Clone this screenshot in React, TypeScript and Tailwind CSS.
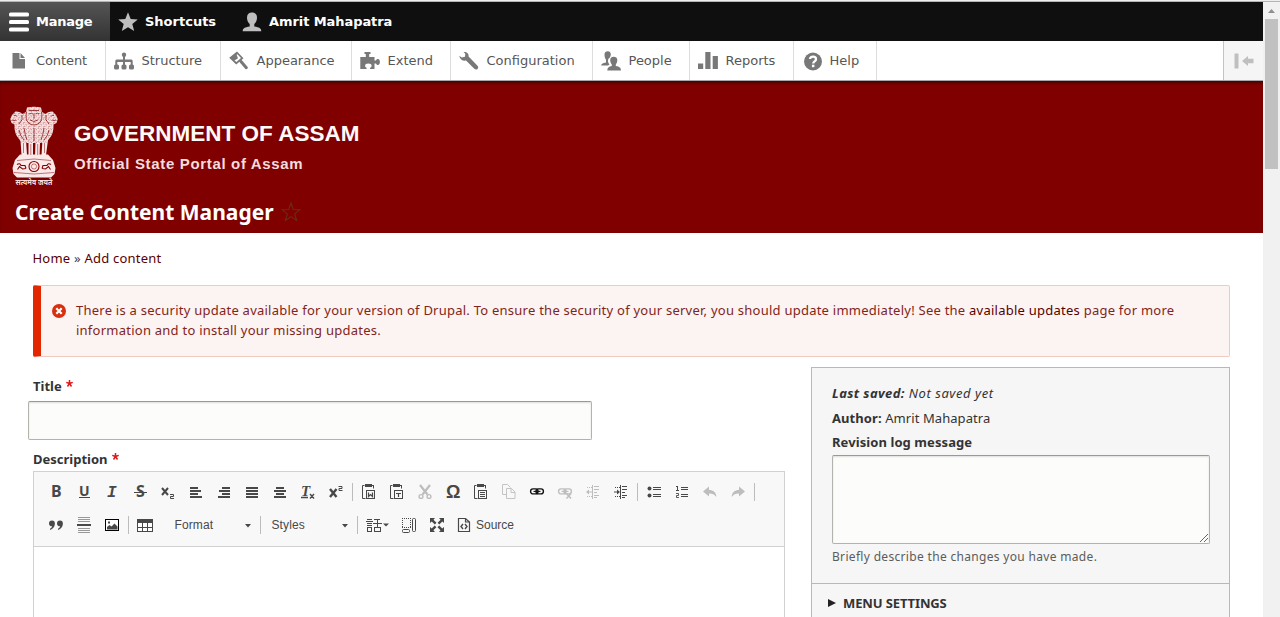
import type { ReactNode } from "react";

const VERDANA = "font-['DejaVu_Sans',sans-serif]";

/* ---------- Administration toolbar icons ---------- */

const trayIcons: Record<string, ReactNode> = {
  content: <path d="M4.500 2h7v6H17v9.500H4.500zM12.500 2l4.500 5h-4.500z" />,
  structure: (
    <>
      <circle cx="10" cy="3.700" r="2.200" />
      <path d="M9 4h2v4.400h5.900c1.200 0 1.800.7 1.800 1.700V15h-2v-4H11v4H9v-4H3.300v4h-2v-5c0-1 .7-1.600 1.700-1.600h6z" />
      <rect x="0" y="13.500" width="5" height="5" rx="1.600" />
      <rect x="7.500" y="13.500" width="5" height="5" rx="1.600" />
      <rect x="15" y="13.500" width="5" height="5" rx="1.600" />
    </>
  ),
  appearance: (
    <>
      <path
        fillRule="evenodd"
        d="M8 .5l6.500 6.800-7.300 6.200L.2 6.800zM7.600 3.800 9 7.200 5.500 9.500l1.900 1.600 4.600-4-3.600-3.900z"
      />
      <path d="M10 10.500l2.200-2 6.500 7.400c.8 1.100-1.200 3-2.300 2.100z" />
    </>
  ),
  extend: (
    <path d="M4.500 1h6v2H9.200v3h5.300v3.500h1.500C16.300 8.500 17 8 17.900 8c1.200 0 2 1.200 2 2.900s-.8 3.100-2 3.100c-1 0-1.600-.6-1.900-1.500h-1.500V18H10v-1.300c1-.4 1.600-1.100 1.600-2 0-1.300-1.300-2.200-3.300-2.200-1.900 0-3.200.9-3.200 2.200 0 .9.500 1.600 1.500 2V18H.3V6h5.500V3H4.500z" />
  ),
  configuration: (
    <path d="M4.500 1C7.800.600 10 2.700 9.600 5.600l8.900 9.200c1.100 1.200.8 2.500 0 3.200-.9.800-2.200.8-3.200-.2L7 9.600C3.600 10.200.8 8.100.2 4.700L2.800 6.500 6 5.800l.3-3z" />
  ),
  people: (
    <>
      <path d="M3.500 3.500C3.500 1.300 5 .3 6.800.3s3 1.200 3 3.200c0 1-.4 2-.9 2.900-1.500 1-2.400 2.600-1.700 4.900.3 1 .8 1.700 1.300 2.300l-1.500 1H.2c0-1.700 1.200-2.400 4.800-3.200V8.800C4.100 7.500 3.500 5.500 3.500 3.500z" />
      <path d="M9.200 9c0-2.200 1.500-3.300 3.500-3.300S16.300 6.800 16.300 9c0 1.800-.6 3.400-1.500 4.500v1.600c3.700.7 5.200 1.800 5.200 4.400H6.300c0-2.600 1.300-3.700 4.500-4.400v-1.600C9.800 12.400 9.200 10.800 9.200 9z" />
    </>
  ),
  reports: <path d="M0 12.500h5.200V18H0zM7.300 1h5.200v17H7.300zM14.700 5h5.200v13h-5.200z" />,
  help: (
    <>
      <circle cx="11" cy="10.500" r="9" />
      <path
        d="M8 8c0-3.200 6-3.200 6 .2 0 2.300-2.800 2-2.800 4.300"
        fill="none"
        stroke="#fff"
        strokeWidth="2.300"
      />
      <rect x="9.900" y="13.700" width="2.500" height="2.500" fill="#fff" />
    </>
  ),
};

const trayItems = [
  { label: "Content", icon: "content", width: "w-[106px]" },
  { label: "Structure", icon: "structure", width: "w-[115px]" },
  { label: "Appearance", icon: "appearance", width: "w-[131px]" },
  { label: "Extend", icon: "extend", width: "w-[99px]" },
  { label: "Configuration", icon: "configuration", width: "w-[142px]" },
  { label: "People", icon: "people", width: "w-[97px]" },
  { label: "Reports", icon: "reports", width: "w-[104px]" },
  { label: "Help", icon: "help", width: "w-[83px]" },
];

function AdminBar() {
  return (
    <nav className={`flex h-[39px] shrink-0 bg-[#0f0f0f] text-[13px] font-bold tracking-[-0.080px] text-white ${VERDANA}`}>
      <a className="flex w-[110px] items-center bg-linear-to-b from-[#555] to-[#333] pl-[9px]">
        <svg className="h-5 w-5" viewBox="0 0 20 20" fill="#fff">
          <rect y="0.500" width="20" height="4" rx="1.500" />
          <rect y="8" width="20" height="4" rx="1.500" />
          <rect y="15.500" width="20" height="4" rx="1.500" />
        </svg>
        <span className="pl-[7px] tracking-[-0.250px]">Manage</span>
      </a>
      <a className="flex w-[124px] items-center pl-[8px]">
        <svg className="h-5 w-5" viewBox="0 0 20 20" fill="#bebebe">
          <path d="m10 .3 2.700 6.700 7.100.4-5.500 4.600 1.900 7.100L10 15.300l-6.200 3.800L5.700 12 .2 7.400l7.100-.4z" />
        </svg>
        <span className="pl-[7px] tracking-[0px]">Shortcuts</span>
      </a>
      <a className="flex items-center pl-[8px]">
        <svg className="h-5 w-5" viewBox="0 0 20 20" fill="#bebebe">
          <path d="M5 5.500C5 2.200 7 .5 10 .5s5 1.700 5 5c0 2.600-1 5-2.700 6.600v2.300c5 .8 7 1.700 7 4.800H.7c0-3.100 2-4 7-4.800v-2.300C6 10.500 5 8.100 5 5.500z" />
        </svg>
        <span className="pl-[7px]">Amrit Mahapatra</span>
      </a>
    </nav>
  );
}

function Tray() {
  return (
    <div className={`flex h-10 shrink-0 border-b border-[#a9a9a9] bg-white text-[13px] text-[#565656] ${VERDANA}`}>
      {trayItems.map((item) => (
        <a key={item.label} className={`flex shrink-0 items-center border-r border-[#ddd] pl-2 ${item.width}`}>
          <svg className="h-5 w-5 shrink-0" viewBox="0 0 20 20" fill="#787878">
            {trayIcons[item.icon]}
          </svg>
          <span className={item.icon === "content" ? "pl-2 tracking-[-0.080px]" : "pl-[7.500px]"}>{item.label}</span>
        </a>
      ))}
      <div className="ml-auto flex w-10 items-center justify-center border-l border-[#c4c4c4] bg-[#f5f5f5]">
        <svg className="h-4 w-5" viewBox="0 0 20 16" fill="#bfbfbf">
          <rect x="0.500" y="0.500" width="4" height="15" rx="0.500" />
          <path d="M8 8l6-5v2.800h5.500v4.400H14V13z" />
        </svg>
      </div>
    </div>
  );
}

/* ---------- Site branding ---------- */

function Emblem() {
  return (
    <svg className="h-[84px] w-12 shrink-0 overflow-visible" viewBox="0 0 48 84">
      <defs>
        <pattern id="mane" width="5" height="4.400" patternUnits="userSpaceOnUse">
          <path
            d="M.3.600q1 1.500 2 0M2.800 2.800q1 1.500 2 0M3.600.300l.6.900M.8 3l.8.700"
            fill="none"
            stroke="#8d1c1c"
            strokeWidth="0.600"
          />
        </pattern>
      </defs>
      <g fill="#fbe9e9">
        <path d="M17 1.500Q24 .2 31 1.500l1 4.500 3.500 2Q38 5 42.500 5.500L46 9l1.700 4-1.200 4-3 1.500q.5 9-4.500 14.500l-3 4H12l-3-4Q4 27.500 4.500 18.500L1.500 17 .3 13 2 9l3.500-3.500Q10 5 12.500 8L16 6z" />
        <path d="M10.500 34h5.500l1 15h-5.500zM18.500 36h4.500v15h-4.500zM25.500 36H30l-.5 15H25zM32.500 34H38l-2 15h-4.500z" />
        <path d="M10 48.500h28L43 54l2.500 8-1 6L41 71.500H7L3.500 68l-1-6L5 54z" />
      </g>
      <path d="M17 1.500Q24 .2 31 1.500l1 4.500 3.500 2Q38 5 42.500 5.500L46 9l1.700 4-1.200 4-3 1.500q.5 9-4.500 14.500l-3 4H12l-3-4Q4 27.500 4.500 18.500L1.500 17 .3 13 2 9l3.500-3.500Q10 5 12.500 8L16 6z" fill="url(#mane)" />
      <g fill="none" stroke="#800000" strokeWidth="0.700">
        <path d="M19 4.500h10M19.500 8q2-1.500 3.500 0M25.500 8q2-1.500 3.500 0M24 8v4.500M20 14q4 3 8 0M16.500 6q-1.500 7 2 11 5.500 4 11 0 3.500-4 2-11" />
        <path d="M4 9.500q2-1 3 1M2 14q2 1.500 4 0M44 9.500q-2-1-3 1M46 14q-2 1.500-4 0M12 9q1.500 5-3 9M36 9q-1.500 5 3 9M14 22q1 7 3 12M34 22q-1 7-3 12M24 22v13M9 24q1 6 5 10M39 24q-1 6-5 10" />
        <path d="M13.500 37v10M20.800 38v11M27.700 38v11M34.500 37v10" strokeWidth="0.500" />
        <path d="M7 54.500q17-3 34 0M4 66.500q20 3 40 0" strokeWidth="0.500" />
        <circle cx="24" cy="60.500" r="5" strokeWidth="1.100" />
        <circle cx="24" cy="60.500" r="2.600" strokeWidth="0.500" />
        <path d="M7 58.500q3-2 4 1l4 0 1 3M7.500 63.500l2-3 3 2.500 3.500-.5M41 58.500q-3-2-4 1l-4 0-1 3M40.500 63.500l-2-3-3 2.500-3.500-.5" strokeWidth="1.100" />
      </g>
      <text x="24" y="79" textAnchor="middle" textLength="37" lengthAdjust="spacingAndGlyphs" fontSize="8" fontWeight="700" fill="#f7dede" fontFamily="'Noto Sans', 'Noto Sans Devanagari', sans-serif">
        सत्यमेव जयते
      </text>
    </svg>
  );
}

function SiteHeader() {
  return (
    <header className="flex h-[152px] shrink-0 flex-col bg-[#800000] shadow-[inset_0_3px_3px_-1px_rgba(40,0,0,0.600)]">
      <div className="flex pt-[25px] pl-[10px]">
        <Emblem />
        <div className="pt-[14px] pl-4 font-['Liberation_Sans',sans-serif] font-bold">
          <div className="text-[22.500px] leading-7 tracking-[0px] whitespace-nowrap text-[#fffafa]">GOVERNMENT OF ASSAM</div>
          <div className="mt-[6px] text-[15px] leading-5 tracking-[0.660px] whitespace-nowrap text-[#f3dcdc]">Official State Portal of Assam</div>
        </div>
      </div>
      <div className="flex items-center pt-[7px] pl-[15px]">
        <h1 className="text-[21px] leading-[30px] font-bold tracking-[0px] whitespace-nowrap text-white">Create Content Manager</h1>
        <svg className="ml-[7px] h-5 w-5" viewBox="0 0 20 20" fill="none" stroke="#6b2c14" strokeWidth="1.100">
          <path d="m10 1 2.300 6.500 6.700.2-5.300 4.200 1.900 6.600-5.600-3.900-5.600 3.900 1.900-6.600L1 7.700l6.700-.2z" />
        </svg>
      </div>
    </header>
  );
}

/* ---------- Editor toolbar ---------- */

function Ico({ children, color = "#484848", wide = "w-7" }: { children: ReactNode; color?: string; wide?: string }) {
  return (
    <button className={`flex h-8 shrink-0 items-center justify-center ${wide}`}>
      <svg className="h-4 w-4 overflow-visible" viewBox="0 0 16 16" fill={color} stroke="none" color={color}>
        {children}
      </svg>
    </button>
  );
}

const Sep = () => <span className="mx-[2px] my-[7px] h-[18px] w-px shrink-0 bg-[#bcbcbc]" />;

function Glyph({ x, y, size, children, italic = false, family = "DejaVu Sans" }: { x: number; y: number; size: number; children: string; italic?: boolean; family?: string }) {
  return (
    <text x={x} y={y} fontSize={size} fontWeight="700" fontStyle={italic ? "italic" : "normal"} fontFamily={family}>
      {children}
    </text>
  );
}

const Lines = ({ rows }: { rows: number[][] }) => (
  <>
    {rows.map(([x, y, w, h], i) => (
      <rect key={i} x={x} y={y} width={w} height={h} />
    ))}
  </>
);

const clipboard = (
  <>
    <path d="M4 0h7v3H4zM2 1h1v1H2zM12 1h1v1h-1z" />
    <path d="M3.500 1.500h-2v13h3M11 1.500h1.500v3" fill="none" stroke="currentColor" />
    <rect x="5.500" y="6.500" width="8" height="8" fill="none" stroke="currentColor" />
  </>
);

const link = (
  <>
    <rect x="1.600" y="4.900" width="7.400" height="5" rx="2.400" fill="none" stroke="currentColor" strokeWidth="1.400" />
    <rect x="7" y="4.900" width="7.400" height="5" rx="2.400" fill="none" stroke="currentColor" strokeWidth="1.400" />
    <path d="M4.500 7.400h7" stroke="currentColor" strokeWidth="1.100" />
  </>
);

function Indent({ out = false }: { out?: boolean }) {
  return (
    <>
      <Lines rows={[[9, 2, 5, 1], [9, 5, 5, 1], [9, 8, 3, 1], [9, 11, 5, 1], [9, 13, 3, 1], [7, 1, 1, 14]]} />
      <path d="M2 3.500h5M2 12.500h5" stroke="currentColor" strokeDasharray="1 1" />
      <path d={out ? "M1 8l3-2.500V7.500h3v1H4v2z" : "M7 8 4 5.500V7.500H1v1h3v2z"} />
    </>
  );
}

const Caret = () => <path d="M0 0h6L3 3.500z" />;

function Combo({ label, width }: { label: string; width: string }) {
  return (
    <button className={`flex h-8 items-center justify-between pr-2 font-['Liberation_Sans',sans-serif] text-[12px] text-[#484848] ${width}`}>
      <span className="pl-[0.500px] tracking-[0.100px]">{label}</span>
      <svg className="mt-px h-1 w-[6px]" viewBox="0 0 6 4" fill="#484848">
        <Caret />
      </svg>
    </button>
  );
}

function Editor() {
  return (
    <div className="flex h-[180px] w-[752px] flex-col border border-[#d1d1d1] bg-white">
      <div className="h-[75px] border-b border-[#d1d1d1] bg-[#f8f8f8] pt-[4px] pl-2">
        <div className="flex h-8">
          <Ico><Glyph x={3} y={13} size={16} family="Noto Sans">B</Glyph></Ico>
          <Ico>
            <Glyph x={3} y={12} size={14} family="Noto Sans">U</Glyph>
            <rect x="3" y="13" width="11" height="1" />
          </Ico>
          <Ico><Glyph x={3} y={13} size={16} italic family="Liberation Mono">I</Glyph></Ico>
          <Ico>
            <Glyph x={4} y={13} size={16} family="Noto Sans">S</Glyph>
            <rect x="2" y="8" width="13" height="1" />
          </Ico>
          <Ico>
            <path d="M2 4l6 7M8 4l-6 7" stroke="currentColor" strokeWidth="2" />
            <path d="M10 10.500h3.500v2h-3v2H14" fill="none" stroke="currentColor" />
          </Ico>
          <Ico><Lines rows={[[2, 3, 8, 2], [2, 6, 11, 2], [2, 9, 8, 2], [2, 12, 12, 2]]} /></Ico>
          <Ico><Lines rows={[[6, 3, 8, 2], [3, 6, 11, 2], [6, 9, 8, 2], [2, 12, 12, 2]]} /></Ico>
          <Ico><Lines rows={[[2, 3, 12, 2], [2, 6, 12, 2], [2, 9, 12, 2], [2, 12, 12, 2]]} /></Ico>
          <Ico><Lines rows={[[4, 3, 8, 2], [2, 6, 12, 2], [4, 9, 8, 2], [2, 12, 12, 2]]} /></Ico>
          <Ico>
            <Glyph x={1} y={12} size={15} italic family="Liberation Serif">T</Glyph>
            <path d="M1 13.500h7M10 10l4 4.500M14 10l-4 4.500" stroke="currentColor" strokeWidth="1.400" />
          </Ico>
          <Ico>
            <path d="M2 5l6.500 8M8.500 5L2 13" stroke="currentColor" strokeWidth="2.400" />
            <path d="M10.500 2.500H14v2h-3v2h3.500" fill="none" stroke="currentColor" />
          </Ico>
          <Sep />
          <Ico>
            {clipboard}
            <path d="M7.500 8.500v4l2-2 2 2v-4" fill="none" stroke="currentColor" strokeWidth="1.200" />
          </Ico>
          <Ico>
            {clipboard}
            <path d="M7 9.500h5M9.500 9.500V13" fill="none" stroke="currentColor" strokeWidth="1.200" />
          </Ico>
          <Ico color="#bdbdbd">
            <path d="M3 1l7.500 9.500M13 1L5.500 10.500" stroke="currentColor" strokeWidth="2.200" />
            <circle cx="4" cy="12.500" r="1.900" fill="none" stroke="currentColor" strokeWidth="1.400" />
            <circle cx="12" cy="12.500" r="1.900" fill="none" stroke="currentColor" strokeWidth="1.400" />
          </Ico>
          <Ico><Glyph x={1} y={14} size={18} family="Liberation Sans">Ω</Glyph></Ico>
          <Ico>
            {clipboard}
            <Lines rows={[[7, 8, 5, 1], [7, 10, 5, 1], [7, 12, 5, 1]]} />
          </Ico>
          <Ico color="#c4c4c4">
            <path d="M5.500 10.500h-4v-10h5l3 3M5.500 4.500h5l3.500 3.500v6.500H5.500zM10 4.500V8.500h4" fill="none" stroke="currentColor" />
          </Ico>
          <Ico color="#111">{link}</Ico>
          <Ico color="#bdbdbd">
            {link}
            <path d="M9.500 9.500l4.500 5M14 9.500l-4.500 5" stroke="currentColor" strokeWidth="1.500" />
          </Ico>
          <Ico color="#bdbdbd"><Indent out /></Ico>
          <Ico><Indent /></Ico>
          <Sep />
          <Ico>
            <circle cx="3.500" cy="4.500" r="2" />
            <circle cx="3.500" cy="11.500" r="2" />
            <Lines rows={[[7, 3, 8, 1], [7, 5, 8, 1], [7, 10, 8, 1], [7, 12, 8, 1]]} />
          </Ico>
          <Ico>
            <Lines rows={[[7, 3, 7, 1], [7, 5, 7, 1], [7, 10, 7, 1], [7, 12, 7, 1], [3, 2, 1, 4], [2, 2, 1, 1], [2, 6, 3, 1]]} />
            <path d="M2 9.500h2.500v2h-2v2H5" fill="none" stroke="currentColor" strokeWidth="0.900" />
          </Ico>
          <Ico color="#bdbdbd"><path d="M1 7.500l6-5V6c4.500 0 7 2.500 7.500 7-2-2.500-4-3.500-7.500-3.500v3z" /></Ico>
          <Ico color="#bdbdbd"><path d="M15 7.500l-6-5V6c-4.500 0-7 2.500-7.500 7 2-2.500 4-3.500 7.500-3.500v3z" /></Ico>
          <Sep />
        </div>
        <div className="mt-px flex h-8">
          <Ico>
            <path d="M1 6.500a2.900 2.900 0 1 1 5.900 0c0 3-1.900 5.500-4.900 6.500v-1.200c1.300-.7 2-1.500 2.200-2.500C2.400 9.500 1 8.400 1 6.500zM9 6.500a2.900 2.900 0 1 1 5.900 0c0 3-1.900 5.500-4.900 6.500v-1.200c1.300-.7 2-1.500 2.200-2.500C10.400 9.500 9 8.400 9 6.500z" />
          </Ico>
          <Ico>
            <g fill="#999"><Lines rows={[[2, 0, 12, 1], [2, 2, 12, 1], [2, 4, 12, 1], [2, 11, 12, 1], [2, 13, 12, 1], [2, 15, 12, 1]]} /></g>
            <rect x="1" y="7" width="14" height="2" />
          </Ico>
          <Ico>
            <rect x="1.500" y="2.500" width="13" height="11" fill="#fff" stroke="#000" />
            <path d="M3 12.500V10l2.500-2 2 1.500L10.500 6.500l3 3v3z" />
            <rect x="4" y="4.500" width="2" height="2" />
          </Ico>
          <Sep />
          <Ico>
            <rect x="0.500" y="2.500" width="15" height="12" fill="#fff" stroke="currentColor" />
            <path d="M0 2h16v4H0z" />
            <path d="M5.500 6v8M10.500 6v8M1 10.500h14" stroke="currentColor" />
          </Ico>
          <span className="w-[15px]" />
          <Combo label="Format" width="w-[85px]" />
          <span className="w-px" />
          <span className="my-[7px] h-[18px] w-px bg-[#bcbcbc]" />
          <span className="w-[10px]" />
          <Combo label="Styles" width="w-[85px]" />
          <span className="w-px" />
          <span className="my-[7px] h-[18px] w-px bg-[#bcbcbc]" />
          <Ico wide="w-[38px]">
            <g transform="translate(-3 0)">
              <Lines rows={[[1, 2, 5, 1], [0, 4, 7, 1], [1, 6, 5, 1], [1, 8, 5, 1], [1, 10, 1, 5], [5, 10, 1, 5], [1, 10, 5, 1], [1, 14, 5, 1], [8, 2, 6, 1], [11, 2, 1, 8], [7, 6, 9, 1], [8, 10, 7, 1], [8, 10, 1, 5], [14, 10, 1, 5], [8, 14, 7, 1]]} />
            </g>
            <path d="M14 6.500h6l-3 3z" />
          </Ico>
          <Ico wide="w-[26px]">
            <path d="M1 1.500h10M1.500 3v7M9.500 3v7M1 10.500h10" stroke="currentColor" strokeDasharray="1 1" fill="none" />
            <rect x="1.500" y="12.500" width="7" height="3" rx="1" fill="none" stroke="currentColor" />
            <rect x="11.500" y="1.500" width="3" height="13" rx="1" fill="none" stroke="currentColor" />
          </Ico>
          <Ico wide="w-[30px]">
            <path d="M1 1h5L4.500 2.700l3 3-1.700 1.700-3-3L1 6zM15 1v5l-1.700-1.500-3 3-1.700-1.700 3-3L10 1zM1 15v-5l1.700 1.500 3-3 1.700 1.700-3 3L6 15zM15 15h-5l1.500-1.700-3-3 1.700-1.700 3 3L15 10z" />
          </Ico>
          <Ico wide="w-[24px]">
            <path d="M2.500 1.500h7l4 3.500v9.500h-11zM9.500 1.500V5h4" fill="none" stroke="currentColor" strokeWidth="1.200" />
            <path d="M7 7L5 9.500 7 12M9 7l2 2.500L9 12" fill="none" stroke="currentColor" strokeWidth="1.400" />
          </Ico>
          <span className="font-['Liberation_Sans',sans-serif] text-[12px] leading-8 text-[#484848]">Source</span>
        </div>
      </div>
    </div>
  );
}

/* ---------- Main column ---------- */

const Required = () => (
  <svg className="mt-[-6px] ml-1 h-[7px] w-[7px]" viewBox="0 0 8 8" stroke="#e01818" strokeWidth="1.700">
    <path d="M4 0v4M4 4 .3 2.700M4 4l3.700-1.300M4 4 1.700 7.400M4 4l2.300 3.400" />
  </svg>
);

function ErrorMessage() {
  return (
    <div className="mt-[17px] ml-[33px] flex h-[72px] w-[1197px] shrink-0 rounded-[2px] border border-l-8 border-[#f0c9c0] border-l-[#e32700] bg-[#fcf4f2] pt-[14px] pl-[11px] text-[#82241a]">
      <svg className="mt-[4px] h-[14px] w-[14px] shrink-0" viewBox="0 0 14 14">
        <circle cx="7" cy="7" r="7" fill="#d8300f" />
        <path d="M4.300 4.300l5.400 5.400M9.700 4.300L4.300 9.700" stroke="#fff" strokeWidth="2.200" />
      </svg>
      <p className="pl-[10px] text-[13px] leading-5 tracking-[0.243px] whitespace-nowrap">
        There is a security update available for your version of Drupal. To ensure the security of your server, you should update immediately! See the{" "}
        <a className="text-[#590000]">available updates</a> page for more
        <br />
        information and to install your missing updates.
      </p>
    </div>
  );
}

function Sidebar() {
  return (
    <aside className="mt-[10px] h-[300px] w-[419px] border border-[#b8b8b8] bg-[#f6f6f6] text-[13px] text-[#333]">
      <div className="h-[216px] border-b border-[#b8b8b8] pt-[13px] pl-5">
        <p className="leading-6 tracking-[0.550px] italic"><b className="font-bold tracking-[0.400px]">Last saved:</b> Not saved yet</p>
        <p className="mt-px leading-6 tracking-[0.080px]"><b className="font-bold">Author:</b> Amrit Mahapatra</p>
        <p className="leading-6 font-bold tracking-[0.080px]">Revision log message</p>
        <div className="mt-px flex h-[89px] w-[378px] items-end justify-end rounded-[2px] border border-[#b3b3ae] border-t-[#999] bg-[#fcfcfa] shadow-[inset_0_1px_2px_rgba(0,0,0,0.125)]">
          <svg className="h-[10px] w-[10px]" viewBox="0 0 10 10" stroke="#555" strokeWidth="0.900">
            <path d="M1 9l8-8M5 9l4-4" />
          </svg>
        </div>
        <p className="mt-[4px] text-[12px] leading-[18px] tracking-[0.320px] text-[#5c5c5b]">Briefly describe the changes you have made.</p>
      </div>
      <div className="flex items-center pt-[7px] pl-4">
        <svg className="h-2 w-2" viewBox="0 0 8 8" fill="#222"><path d="M0 0l8 4-8 4z" /></svg>
        <span className="pl-[7px] leading-6 font-bold tracking-[-0.120px]">MENU SETTINGS</span>
      </div>
    </aside>
  );
}

function Scrollbar() {
  return (
    <div className="flex w-[17px] flex-col items-center bg-[#f1f1f1]">
      <svg className="mt-[7px] h-1 w-[7px]" viewBox="0 0 7 4" fill="#8f8f8f"><path d="M0 4h7L3.500 0z" /></svg>
      <div className="mt-[6px] h-[150px] w-[13px] bg-[#c1c1c1]" />
    </div>
  );
}

export default function App() {
  return (
    <div className="flex h-[617px] w-[1280px] flex-col overflow-hidden bg-white font-['Noto_Sans',sans-serif]">
      <div className="h-[2px] shrink-0 border-b border-[#b4b4b8] bg-[#eceef0]" />
      <div className="flex min-h-0 flex-1">
        <div className="flex w-[1263px] flex-col overflow-hidden">
          <AdminBar />
          <Tray />
          <SiteHeader />
          <div className="shrink-0 pt-[15px] pl-[32.500px] text-[13px] leading-5 tracking-[0.220px] text-[#590000]">
            Home <span className="text-[#444]">»</span> Add content
          </div>
          <ErrorMessage />
          <div className="flex shrink-0">
            <main className="w-[783px] shrink-0 pl-7 text-[13px] text-[#333]">
              <div className="mt-[19px] flex items-center pl-[5px] leading-5 font-bold">Title<Required /></div>
              <div className="mt-[5px] h-[39px] w-[564px] rounded-[2px] border border-[#b3b3ae] border-t-[#999] bg-[#fcfcfa] shadow-[inset_0_1px_2px_rgba(0,0,0,0.125)]" />
              <div className="mt-[9px] flex items-center pl-[5px] leading-5 font-bold">Description<Required /></div>
              <div className="mt-[2px] pl-[5px]"><Editor /></div>
            </main>
            <div className="pl-7"><Sidebar /></div>
          </div>
        </div>
        <Scrollbar />
      </div>
    </div>
  );
}
